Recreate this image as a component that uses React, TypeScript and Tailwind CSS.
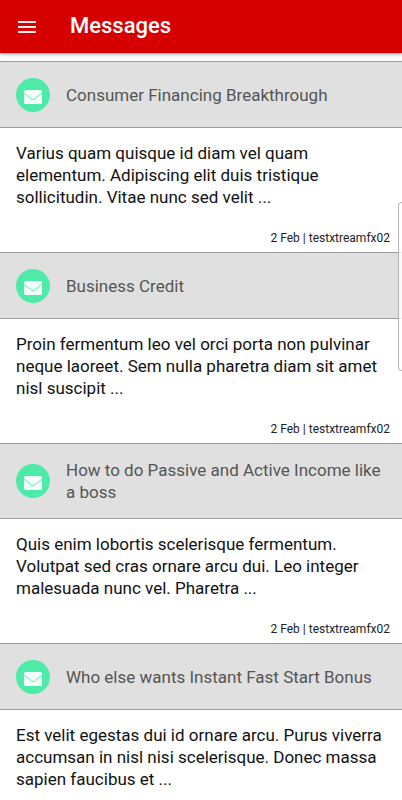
interface Message {
  id: number
  title: string
  excerpt: string
  date: string
  author: string
}

const messages: Message[] = [
  {
    id: 1,
    title: 'Consumer Financing Breakthrough',
    excerpt:
      'Varius quam quisque id diam vel quam elementum. Adipiscing elit duis tristique sollicitudin. Vitae nunc sed velit ...',
    date: '2 Feb',
    author: 'testxtreamfx02',
  },
  {
    id: 2,
    title: 'Business Credit',
    excerpt:
      'Proin fermentum leo vel orci porta non pulvinar neque laoreet. Sem nulla pharetra diam sit amet nisl suscipit ...',
    date: '2 Feb',
    author: 'testxtreamfx02',
  },
  {
    id: 3,
    title: 'How to do Passive and Active Income like a boss',
    excerpt:
      'Quis enim lobortis scelerisque fermentum. Volutpat sed cras ornare arcu dui. Leo integer malesuada nunc vel. Pharetra ...',
    date: '2 Feb',
    author: 'testxtreamfx02',
  },
  {
    id: 4,
    title: 'Who else wants Instant Fast Start Bonus',
    excerpt:
      'Est velit egestas dui id ornare arcu. Purus viverra accumsan in nisl nisi scelerisque. Donec massa sapien faucibus et ...',
    date: '',
    author: '',
  },
]

function EnvelopeIcon() {
  return (
    <svg viewBox="0 0 18 14" className="mt-1 h-3.5 w-[18px]" aria-hidden="true">
      <rect width="18" height="14" rx="1.6" fill="#f3fffa" />
      <path d="M0 3.2 7.6 9.1Q9 10.1 10.4 9.1L18 3.2" fill="none" stroke="#4eeaa8" strokeWidth="0.9" />
    </svg>
  )
}

function Header({ title }: { title: string }) {
  return (
    <header className="relative flex h-[53px] items-center bg-[#d60000] pl-4 shadow-[0_1px_4px_rgba(0,0,0,0.4)]">
      <button type="button" aria-label="Menu" className="flex h-6 w-[22px] items-center justify-center">
        <svg viewBox="0 0 18 12" className="h-3 w-[18px]" fill="#ffe9e9" aria-hidden="true">
          <path d="M0 0h18v2H0zM0 5h18v2H0zM0 10h18v2H0z" />
        </svg>
      </button>
      <h1 className="ml-8 pb-0.5 text-[22px] font-medium text-white">{title}</h1>
    </header>
  )
}

function MessageItem({ message }: { message: Message }) {
  return (
    <li>
      <div className="flex min-h-[67px] items-center gap-4 border-y border-[#9c9c9c] bg-[#e0e0e0] px-4 py-[15px]">
        <span className="flex size-[34px] shrink-0 items-center justify-center rounded-full bg-[#4eeaa8]">
          <EnvelopeIcon />
        </span>
        <h2 className="text-[17px] leading-[22px] text-[#555555]">{message.title}</h2>
      </div>
      <div className="pt-3.5 pr-3 pb-1.5 pl-4">
        <p className="text-[17px] leading-[22px] text-[#111111]">{message.excerpt}</p>
        {message.date && (
          <p className="mt-[22px] text-right text-xs text-[#222222]">
            {message.date} | {message.author}
          </p>
        )}
      </div>
    </li>
  )
}

export default function App() {
  return (
    <div className="relative min-h-screen bg-white font-['Roboto',sans-serif]">
      <Header title="Messages" />
      <main className="pt-2">
        <ul>
          {messages.map((message) => (
            <MessageItem key={message.id} message={message} />
          ))}
        </ul>
      </main>
      {/* edge panel handle */}
      <div className="absolute top-[202px] right-0 h-[169px] w-1 rounded-l border border-r-0 border-[#b5b5b5] bg-white/85" />
    </div>
  )
}
